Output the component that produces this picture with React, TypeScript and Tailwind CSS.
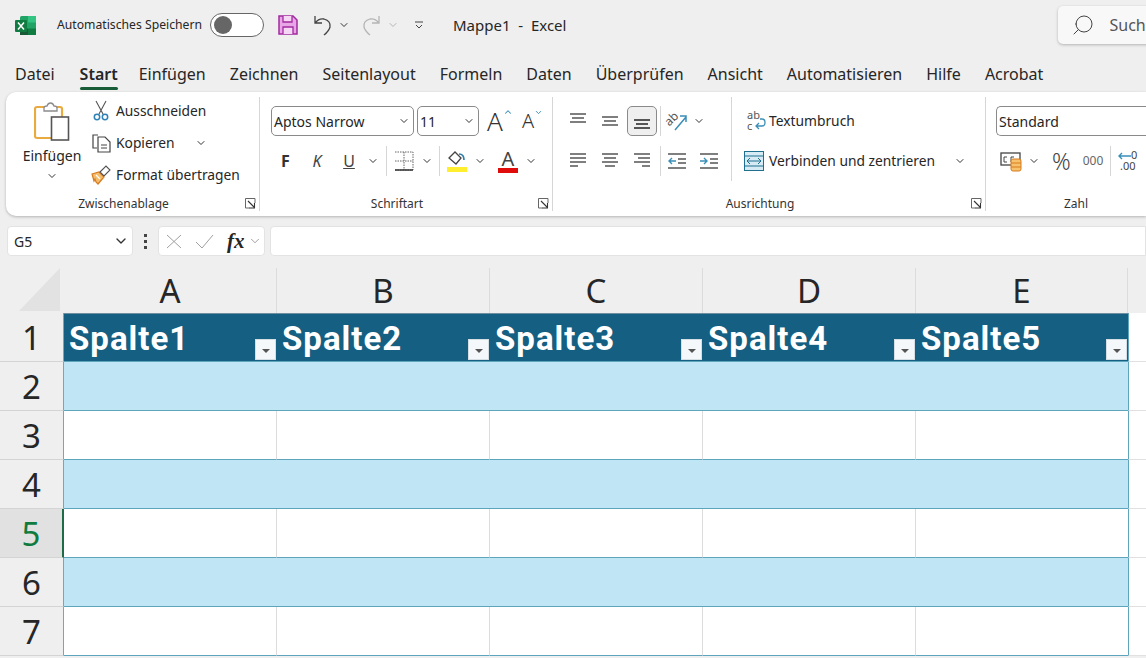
import { ChevronDown, ChevronUp, Search } from "lucide-react";
import type { ReactNode } from "react";

const TABS = ["Datei", "Start", "Einfügen", "Zeichnen", "Seitenlayout", "Formeln", "Daten", "Überprüfen", "Ansicht", "Automatisieren", "Hilfe", "Acrobat"];
const COLS = ["A", "B", "C", "D", "E"];
const ROWS = [2, 3, 4, 5, 6, 7];

const Chev = ({ className = "" }: { className?: string }) => (
  <ChevronDown size={12} strokeWidth={2} className={`text-[#333] shrink-0 ${className}`} />
);

// Zeilen-Icon für Ausrichtung: lines = [y, x1, x2] je Zeile
function Lines({ lines, color = "#555" }: { lines: [number, number, number][]; color?: string }) {
  return (
    <svg width="20" height="20" viewBox="0 0 20 20">
      {lines.map(([y, a, b], i) => (
        <line key={i} x1={a} x2={b} y1={y} y2={y} stroke={color} strokeWidth="1.3" />
      ))}
    </svg>
  );
}

const Launcher = () => (
  <svg width="11" height="11" viewBox="0 0 11 11" className="absolute right-[3px] bottom-[2px]">
    <path d="M10 5V.5H.5V10H5" fill="none" stroke="#666" strokeWidth="1" />
    <path d="M3 3l6 6M9.5 5v5h-5" fill="none" stroke="#333" strokeWidth="1.1" />
  </svg>
);

function Group({ label, width, launcher, children, last }: { label: string; width: string; launcher?: boolean; children: ReactNode; last?: boolean }) {
  return (
    <div className={`relative flex flex-col shrink-0 my-[5px] ${width} ${last ? "" : "border-r border-[#d6d6d6]"}`}>
      <div className="flex-1 min-h-0">{children}</div>
      <div className={`h-[16px] pt-[1px] text-center text-[12px] leading-[16px] text-[#333] ${launcher ? "pr-[18px]" : ""}`}>{label}</div>
      {launcher && <Launcher />}
    </div>
  );
}

const Sep = () => <div className="w-px h-[30px] bg-[#d6d6d6] shrink-0" />;

const Slot = ({ w, children }: { w: string; children: ReactNode }) => (
  <div className={`flex items-center justify-center h-[30px] shrink-0 ${w}`}>{children}</div>
);

function Select({ w, text }: { w: string; text: string }) {
  return (
    <div className={`flex items-center justify-between h-[30px] shrink-0 rounded-[5px] border border-[#8a8a8a] bg-white pl-[2px] pr-[3px] text-[14px] text-[#262626] ${w}`}>
      <span>{text}</span>
      <Chev />
    </div>
  );
}

function Clipboard() {
  return (
    <div className="flex -mt-[2px] pl-[11px]">
      <div className="flex flex-col items-center w-[70px] pt-[7px]">
        <svg width="36" height="40" viewBox="0 0 36 40">
          <path d="M8 5h18a2 2 0 0 1 2 2v27a2 2 0 0 1-2 2H3a2 2 0 0 1-2-2V7a2 2 0 0 1 2-2z" fill="#fff" stroke="#e9ab3f" strokeWidth="2.2" />
          <path d="M10 6q0-2 3-2 1-3 3.500-3t3.500 3q3 0 3 2v3H10z" fill="#fff" stroke="#8b8b8b" strokeWidth="1.3" />
          <rect x="17.500" y="15" width="17" height="23" fill="#fff" stroke="#555" strokeWidth="1.6" />
        </svg>
        <span className="mt-[4px] text-[14px] leading-[20px] text-[#262626]">Einfügen</span>
        <Chev className="mt-[4px]" />
      </div>
      <div className="flex flex-col pl-[3px]">
        <div className="flex items-center h-[32px]">
          <span className="flex w-[26px] pl-[2px]">
            <svg width="18" height="22" viewBox="0 0 18 22">
              <path d="M4 1l7 13M14 1L7 14" fill="none" stroke="#555" strokeWidth="1.1" />
              <circle cx="5" cy="17" r="2.700" fill="none" stroke="#2f82b5" strokeWidth="1.500" />
              <circle cx="13" cy="17" r="2.700" fill="none" stroke="#2f82b5" strokeWidth="1.500" />
            </svg>
          </span>
          <span className="text-[13.8px] text-[#262626]">Ausschneiden</span>
        </div>
        <div className="flex items-center h-[32px]">
          <span className="flex w-[26px] pl-[1px]">
            <svg width="20" height="20" viewBox="0 0 20 20">
              <path d="M7 2H2v13h4" fill="#fff" stroke="#444" strokeWidth="1.2" />
              <path d="M7 4h7l5 5v10H7z" fill="#fff" stroke="#444" strokeWidth="1.2" />
              <path d="M10 12h6M10 15h6" stroke="#444" />
            </svg>
          </span>
          <span className="text-[13.8px] text-[#262626]">Kopieren</span>
          <Chev className="ml-[21px]" />
        </div>
        <div className="flex items-center h-[32px]">
          <span className="flex w-[26px] pl-[1px]">
            <svg width="20" height="20" viewBox="0 0 20 20">
              <path d="M1 9l7-2 5 5-6 7-2-2-1-3-1 2z" fill="#f4bd6b" stroke="#d97b1f" strokeWidth="1.200" />
              <path d="M5 10l4 4" stroke="#fff" strokeWidth="1.200" />
              <path d="M9 7l6-6 4 4-6 6z" fill="#fff" stroke="#555" strokeWidth="1.100" />
            </svg>
          </span>
          <span className="text-[13.8px] text-[#262626] whitespace-nowrap">Format übertragen</span>
        </div>
      </div>
    </div>
  );
}

function FontGroup() {
  return (
    <div className="pt-[9px] pl-[11px]">
      <div className="flex items-center gap-[3px]">
        <Select w="w-[143px]" text="Aptos Narrow" />
        <Select w="w-[62px]" text="11" />
        <span className="relative w-[30px] ml-[5px] text-[26px] font-light leading-[30px] text-[#333]">A<ChevronUp size={10} strokeWidth={2.5} className="absolute left-[16px] top-[1px] text-[#3a8fb7]" /></span>
        <span className="relative w-[24px] ml-[2px] text-[20px] font-light leading-[30px] text-[#333]">A<ChevronDown size={9} strokeWidth={2.5} className="absolute left-[12px] top-[2px] text-[#3a8fb7]" /></span>
      </div>
      <div className="flex items-center mt-[10px]">
        <Slot w="w-[29px]"><span className="text-[16px] font-bold text-[#333]">F</span></Slot>
        <Slot w="w-[34px]"><span className="text-[16px] italic text-[#444]">K</span></Slot>
        <Slot w="w-[30px]"><span className="text-[16px] underline text-[#444]">U</span></Slot>
        <Slot w="w-[18px]"><Chev /></Slot>
        <Slot w="w-[4px]"><span /></Slot>
        <Sep />
        <Slot w="w-[33px]">
          <svg width="20" height="20" viewBox="0 0 20 20">
            <path d="M1 1h18v18H1M10 1v18M1 10h18" fill="none" stroke="#666" strokeDasharray="1.500 1" />
            <path d="M1 19h18" stroke="#333" strokeWidth="1.500" />
          </svg>
        </Slot>
        <Slot w="w-[14px]"><Chev /></Slot>
        <Slot w="w-[5px]"><span /></Slot>
        <Sep />
        <Slot w="w-[34px]">
          <svg width="20" height="22" viewBox="0 0 20 22">
            <path d="M2 8l6-6 6 6-5 6z" fill="#fff" stroke="#444" strokeWidth="1.300" />
            <path d="M12 4q5 0 5 6" fill="none" stroke="#2f7ea8" strokeWidth="1.700" />
            <rect y="17" width="20" height="5" fill="#ffee2e" />
          </svg>
        </Slot>
        <Slot w="w-[12px]"><Chev /></Slot>
        <Slot w="w-[40px] ml-[2px]">
          <span className="relative flex flex-col items-center w-[20px] h-[24px]">
            <span className="text-[20px] leading-[20px] text-[#444]">A</span>
            <span className="absolute bottom-0 w-[20px] h-[5px] bg-[#e00b0b]" />
          </span>
        </Slot>
        <Slot w="w-[6px]"><Chev /></Slot>
      </div>
    </div>
  );
}

const AlignBtn = ({ lines, active }: { lines: [number, number, number][]; active?: boolean }) => (
  <div className={`flex items-center justify-center w-[30px] h-[30px] shrink-0 rounded-[5px] mr-[2px] ${active ? "border border-[#8a8a8a] bg-[#efefef]" : ""}`}>
    <Lines lines={lines} color={active ? "#222" : "#555"} />
  </div>
);

function AlignGroup() {
  return (
    <div className="flex">
      <div className="pt-[9px] pl-[10px] w-[179px] border-r border-[#d6d6d6] h-[84px] shrink-0">
        <div className="flex items-center">
          <AlignBtn lines={[[3, 2, 18], [7, 4, 16], [11, 2, 18]]} />
          <AlignBtn lines={[[6, 2, 18], [10, 4, 16], [14, 2, 18]]} />
          <AlignBtn active lines={[[9, 2, 18], [13, 4, 16], [17, 2, 18]]} />
          <div className="w-px h-[30px] bg-[#d6d6d6] ml-[1px] mr-[5px]" />
          <svg width="22" height="20" viewBox="0 0 22 20" className="overflow-visible">
            <text x="0" y="12" fontSize="12" fill="#555" transform="rotate(-45 6 10)" fontFamily="Noto Sans">ab</text>
            <path d="M9 19L20 6M14 5h6v6" fill="none" stroke="#3a8fb7" strokeWidth="1.500" />
          </svg>
          <Chev className="ml-[5px]" />
        </div>
        <div className="flex items-center mt-[10px]">
          <AlignBtn lines={[[3, 2, 18], [7, 2, 18], [11, 2, 18], [15, 2, 10]]} />
          <AlignBtn lines={[[3, 2, 18], [7, 4, 16], [11, 2, 18], [15, 5, 15]]} />
          <AlignBtn lines={[[3, 2, 18], [7, 6, 18], [11, 2, 18], [15, 10, 18]]} />
          <div className="w-px h-[30px] bg-[#d6d6d6] ml-[1px] mr-[6px]" />
          <svg width="20" height="20" viewBox="0 0 20 20" className="mr-[12px]">
            <path d="M1 3h18M11 8h8M11 12h8M1 17h18" stroke="#555" strokeWidth="1.300" />
            <path d="M9 10H2M5 7l-3 3 3 3" fill="none" stroke="#3a8fb7" strokeWidth="1.400" />
          </svg>
          <svg width="20" height="20" viewBox="0 0 20 20">
            <path d="M1 3h18M11 8h8M11 12h8M1 17h18" stroke="#555" strokeWidth="1.300" />
            <path d="M1 10h7M5 7l3 3-3 3" fill="none" stroke="#3a8fb7" strokeWidth="1.400" />
          </svg>
        </div>
      </div>
      <div className="pt-[9px] pl-[12px]">
        <div className="flex items-center h-[30px] pl-[2px]">
          <svg width="20" height="24" viewBox="0 0 20 24" className="mr-[3px] overflow-visible">
            <text x="1" y="10" fontSize="11" fill="#555" fontFamily="Noto Sans">ab</text>
            <text x="1" y="21" fontSize="11" fill="#555" fontFamily="Noto Sans">c</text>
            <path d="M14 10h2q3 0 3 3.500t-3 3.500h-6M13 14l-3 3 3 3" fill="none" stroke="#3a8fb7" strokeWidth="1.300" />
          </svg>
          <span className="text-[13.8px] text-[#262626]">Textumbruch</span>
        </div>
        <div className="flex items-center h-[30px] mt-[10px]">
          <svg width="20" height="20" viewBox="0 0 20 20" className="mr-[5px]">
            <rect x=".5" y=".5" width="19" height="19" fill="#d6ebf4" stroke="#1f6f8f" />
            <path d="M0 5h20M0 15h20" stroke="#1f6f8f" />
            <path d="M3 10h14M6 7l-3 3 3 3M14 7l3 3-3 3" fill="none" stroke="#1f6f8f" />
          </svg>
          <span className="text-[13.8px] text-[#262626] whitespace-nowrap">Verbinden und zentrieren</span>
          <Chev className="ml-[19px]" />
        </div>
      </div>
    </div>
  );
}

function NumberGroup() {
  return (
    <div className="pt-[9px] pl-[10px]">
      <div className="flex items-center h-[30px] w-[170px] rounded-l-[5px] border-y border-l border-[#8a8a8a] pl-[2px] text-[14px] text-[#262626]">Standard</div>
      <div className="flex items-center mt-[10px] h-[30px]">
        <svg width="24" height="22" viewBox="0 0 24 22" className="ml-[4px] overflow-visible">
          <rect x="1" y="3" width="19" height="12" fill="#fff" stroke="#444" strokeWidth="1.300" />
          <path d="M7 7H4v5h3M14 7h-3v5h3" fill="none" stroke="#444" />
          <rect x="11" y="9" width="10" height="12" rx="2" fill="#f6c26b" stroke="#d97b1f" />
          <path d="M11 13h10M11 17h10" stroke="#d97b1f" />
        </svg>
        <Chev className="ml-[4px]" />
        <span className="ml-[12px] text-[23px] leading-none font-light text-[#444]">%</span>
        <span className="ml-[12px] text-[12px] text-[#666]">000</span>
        <div className="w-px h-[30px] bg-[#d6d6d6] ml-[7px] mr-[6px]" />
        <svg width="22" height="24" viewBox="0 0 22 24" className="overflow-visible">
          <path d="M14 7H2M5 4L2 7l3 3" fill="none" stroke="#3a8fb7" strokeWidth="1.400" />
          <text x="14" y="10" fontSize="11" fill="#444" fontFamily="Noto Sans">0</text>
          <text x="3" y="21" fontSize="11" fill="#444" fontFamily="Noto Sans">.00</text>
        </svg>
      </div>
    </div>
  );
}

const FilterBtn = () => (
  <span className="absolute right-[1px] bottom-[1px] flex items-center justify-center w-[21px] h-[21px] bg-[#f4f8fa] border border-[#d5dee3]">
    <span className="mt-[2px] w-0 h-0 border-x-[4px] border-x-transparent border-t-[4px] border-t-[#555]" />
  </span>
);

function Sheet() {
  return (
    <div className="grid grid-cols-[64px_213px_213px_213px_213px_212px_1fr] grid-rows-[45px_repeat(7,49px)] mt-[12px] text-[#262626]">
      {/* Kopfzeile */}
      <div className="flex items-end justify-end pr-[4px] pb-[2px] bg-[#efefef]">
        <span className="w-[41px] h-[43px] bg-[#e2e2e2] [clip-path:polygon(100%_0,100%_100%,0_100%)]" />
      </div>
      {COLS.map((c) => (
        <div key={c} className="flex items-center justify-center bg-[#efefef] border-r border-[#dcdcdc] text-[33px] leading-none">{c}</div>
      ))}
      <div className="bg-[#efefef]" />

      {/* Zeile 1 */}
      <div className="flex items-center justify-center bg-[#efefef] border-b border-[#d4d4d4] text-[33px] leading-none border-r border-r-[#8f9ea5]">1</div>
      {COLS.map((c, i) => (
        <div key={c} className="relative flex items-center pl-[5px] pt-[1px] bg-[#156082] border-b border-[#5fa4bd] border-t border-t-[#6d8f9f]">
          <span className="font-['Roboto',sans-serif] font-bold text-[33px] tracking-[1px] leading-none text-white">Spalte{i + 1}</span>
          <FilterBtn />
        </div>
      ))}
      <div className="bg-white border-b border-l border-b-[#e1e1e1] border-l-[#5fa4bd]" />

      {ROWS.map((r) => {
        const band = r % 2 === 0;
        const sel = r === 5;
        return [
          <div key={`h${r}`} className={`flex items-center justify-center border-b border-[#d4d4d4] text-[33px] leading-none border-r ${sel ? "bg-[#e1e1e1] text-[#0f7b3f] border-r-2 border-r-[#1e6b45]" : "bg-[#efefef] border-r-[#8f9ea5]"}`}>{r}</div>,
          ...COLS.map((c, i) => (
            <div key={c + r} className={`border-b border-[#5fa4bd] ${band ? "bg-[#c0e6f5]" : `bg-white ${i < 4 ? "border-r border-r-[#dcdcdc]" : ""}`}`} />
          )),
          <div key={`x${r}`} className="bg-white border-b border-l border-b-[#e1e1e1] border-l-[#5fa4bd]" />,
        ];
      })}
    </div>
  );
}

export default function App() {
  return (
    <div className="w-[1146px] h-[658px] overflow-hidden bg-[#efefef] font-['Noto_Sans',sans-serif] text-[#262626]">
      {/* Titelleiste */}
      <div className="flex items-center h-[50px] pl-[15px] whitespace-nowrap [&>*]:shrink-0">
        <svg width="21" height="21" viewBox="0 0 21 21">
          <rect x="5" y="1" width="16" height="19" rx="1.500" fill="#21a366" />
          <rect x="13" y="1" width="8" height="6.500" fill="#33c481" />
          <rect x="13" y="13.500" width="8" height="6.500" fill="#107c41" />
          <rect x="5" y="13.500" width="8" height="6.500" fill="#185c37" />
          <rect y="5" width="12" height="12" rx="1" fill="#107c41" />
          <path d="M3 7.500l6 7M9 7.500l-6 7" stroke="#fff" strokeWidth="1.500" />
        </svg>
        <span className="ml-[21px] text-[12.2px]">Automatisches Speichern</span>
        <span className="flex items-center ml-[8px] w-[54px] h-[24px] rounded-full border border-[#666] bg-white pl-[3px]">
          <span className="w-[18px] h-[18px] rounded-full bg-[#666]" />
        </span>
        <svg width="20" height="20" viewBox="0 0 20 20" className="ml-[14px]">
          <path d="M1 1h14l4 4v14H1z" fill="#e9a6e6" stroke="#a12aa0" strokeWidth="1.500" />
          <path d="M5 1v6h9V1M5 19v-7h10v7" fill="#f5d6f4" stroke="#a12aa0" strokeWidth="1.300" />
        </svg>
        <svg width="20" height="22" viewBox="0 0 20 22" className="ml-[15px]">
          <path d="M2 2v7h7M2 9q4-5 9-4 7 2 6 8-1 4-6 8" fill="none" stroke="#444" strokeWidth="1.300" />
        </svg>
        <Chev className="ml-[5px]" />
        <svg width="20" height="22" viewBox="0 0 20 22" className="ml-[11px]">
          <path d="M18 2v7h-7M18 9q-4-5-9-4-7 2-6 8 1 4 6 8" fill="none" stroke="#b5b5b5" strokeWidth="1.300" />
        </svg>
        <ChevronDown size={12} className="ml-[6px] text-[#b5b5b5]" />
        <svg width="10" height="10" viewBox="0 0 10 10" className="ml-[15px]">
          <path d="M1 2h8M2 5l3 3 3-3" fill="none" stroke="#444" />
        </svg>
        <span className="ml-[29px] text-[15px]">Mappe1&nbsp; -&nbsp; Excel</span>
        <div className="flex items-center ml-[492px] w-[100px] h-[38px] rounded-[5px] bg-[#f8f8f8] shadow-[0_1px_3px_rgba(0,0,0,0.25)] pl-[13px]">
          <Search size={24} strokeWidth={1} className="shrink-0 text-[#444] -scale-x-100" />
          <span className="ml-[14px] text-[16px] text-[#555]">Suchen</span>
        </div>
      </div>
      {/* Registerkarten */}
      <div className="flex items-center h-[42px] pl-[15px] pt-[6px] gap-[24px] whitespace-nowrap text-[16px]">
        {TABS.map((t) => (
          <span key={t} className={`relative ${t === "Start" ? "font-semibold ml-[1px] -mr-[3px]" : ""}`}>
            {t}
            {t === "Start" && <span className="absolute left-0 right-0 -bottom-[4px] h-[3px] rounded bg-[#185c37]" />}
          </span>
        ))}
      </div>
      {/* Menüband */}
      <div className="flex ml-[6px] h-[124px] bg-white rounded-l-[10px] shadow-[0_1px_3px_rgba(0,0,0,0.25)] overflow-hidden">
        <Group label="Zwischenablage" width="w-[254px]" launcher><Clipboard /></Group>
        <Group label="Schriftart" width="w-[293px]" launcher><FontGroup /></Group>
        <Group label="Ausrichtung" width="w-[433px]" launcher><AlignGroup /></Group>
        <Group label="Zahl" width="w-[180px]" last><NumberGroup /></Group>
      </div>
      {/* Bearbeitungsleiste */}
      <div className="flex items-center h-[30px] mt-[10px] pl-[7px]">
        <div className="flex items-center justify-between w-[126px] h-full rounded-[4px] bg-white border border-[#e3e3e3] pl-[6px] pr-[3px] text-[14px]">
          G5
          <ChevronDown size={16} className="text-[#333]" />
        </div>
        <div className="flex flex-col items-center justify-center gap-[3px] w-[25px]">
          <span className="w-[3px] h-[3px] bg-[#444]" />
          <span className="w-[3px] h-[3px] bg-[#444]" />
          <span className="w-[3px] h-[3px] bg-[#444]" />
        </div>
        <div className="flex items-center w-[107px] h-full rounded-[4px] bg-white border border-[#e3e3e3] pl-[7px]">
          <svg width="16" height="15" viewBox="0 0 16 15">
            <path d="M1 1l14 13M15 1L1 14" fill="none" stroke="#a0a0a0" />
          </svg>
          <svg width="19" height="15" viewBox="0 0 19 15" className="ml-[13px]">
            <path d="M1 8l6 6L18 1" fill="none" stroke="#a0a0a0" />
          </svg>
          <span className="ml-[13px] font-['Liberation_Serif',serif] italic font-bold text-[21px] leading-none">fx</span>
          <ChevronDown size={14} strokeWidth={1.2} className="ml-[3px] text-[#777]" />
        </div>
        <div className="ml-[5px] flex-1 h-full rounded-l-[4px] bg-white border border-[#e3e3e3]" />
      </div>
      <Sheet />
    </div>
  );
}
